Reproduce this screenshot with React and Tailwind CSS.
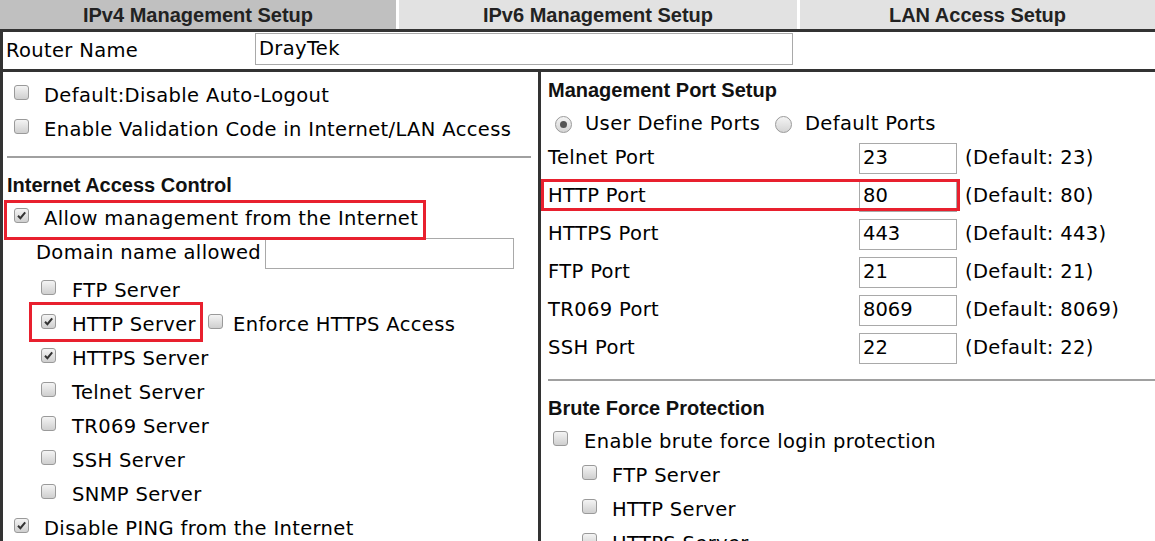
import React from "react";

function Check({ on }) {
    return (
        <span className="inline-flex w-[15px] h-[15px] shrink-0 items-center justify-center rounded-[3px] border border-[#9a9a9a] bg-linear-to-b from-[#f4f4f4] to-[#cfcfcf] mb-[7px]">
            {on && (
                <svg width="11" height="11" viewBox="0 0 11 11">
                    <path d="M2 5.8 L4.4 8.2 L9.2 2.4" fill="none" stroke="#333" strokeWidth="2" />
                </svg>
            )}
        </span>
    );
}

function Radio({ on }) {
    return (
        <span className="inline-flex w-[17px] h-[17px] shrink-0 items-center justify-center rounded-full border border-[#9a9a9a] bg-linear-to-b from-[#f4f4f4] to-[#d4d4d4]">
            {on && <span className="w-[7px] h-[7px] rounded-full bg-[#555]" />}
        </span>
    );
}

function Heading({ children, className = "" }) {
    return (
        <div className={"flex items-center pl-[4px] font-['Liberation_Sans',Arial,sans-serif] font-bold text-[20px] tracking-normal text-[#111] " + className}>
            {children}
        </div>
    );
}

const servers = [
    ["HTTPS Server", true],
    ["Telnet Server", false],
    ["TR069 Server", false],
    ["SSH Server", false],
    ["SNMP Server", false],
];

const ports = [
    ["Telnet Port", "23"],
    ["HTTP Port", "80", true],
    ["HTTPS Port", "443"],
    ["FTP Port", "21"],
    ["TR069 Port", "8069"],
    ["SSH Port", "22"],
];

export default function App() {
    return (
        <div className="w-[1155px] h-[541px] overflow-hidden bg-white text-black font-['DejaVu_Sans',Verdana,sans-serif] text-[19.5px] tracking-[0.35px] leading-none">
            {/* tabs */}
            <div className="flex h-[29px] gap-[3px] font-['Liberation_Sans',Arial,sans-serif] font-bold text-[20px] tracking-normal text-[#222]">
                <div className="w-[396px] bg-[#c0c0c0] flex items-center justify-center">IPv4 Management Setup</div>
                <div className="w-[398px] bg-[#e2e2e2] flex items-center justify-center">IPv6 Management Setup</div>
                <div className="flex-1 bg-[#e2e2e2] flex items-center justify-center">LAN Access Setup</div>
            </div>

            <div className="h-[3px] bg-[#333]" />
            <div className="h-[37px] flex items-center border-l-[3px] border-[#333]">
                <span className="w-[252px] pl-[3px]">Router Name</span>
                <div className="w-[538px] h-[32px] -mt-[3px] border border-[#a9a9a9] flex items-center pl-[3px]">DrayTek</div>
            </div>
            <div className="h-[3px] bg-[#333]" />

            <div className="flex">
                {/* left column */}
                <div className="w-[541px] shrink-0 h-[480px] border-l-[3px] border-r-[3px] border-[#333] pt-[7px]">
                    <div className="h-[34px] flex items-center pl-[11px]">
                        <Check />
                        <span className="ml-[15px]">Default:Disable Auto-Logout</span>
                    </div>
                    <div className="h-[34px] flex items-center pl-[11px]">
                        <Check />
                        <span className="ml-[15px]">Enable Validation Code in Internet/LAN Access</span>
                    </div>
                    <div className="mt-[9px] ml-[4px] w-[524px] h-[2px] bg-[#a0a0a0]" />

                    <Heading className="mt-[10px] h-[34px]">Internet Access Control</Heading>
                    <div className="relative h-[34px] flex items-center pl-[11px]">
                        <Check on />
                        <span className="ml-[15px]">Allow management from the Internet</span>
                        <span className="absolute left-[1px] -top-[2px] w-[422px] h-[40px] border-[3px] border-[#e8202e]" />
                    </div>
                    <div className="h-[34px] flex items-center pl-[33px]">
                        <span className="w-[229px]">Domain name allowed</span>
                        <div className="w-[249px] h-[31px] border border-[#a9a9a9]" />
                    </div>

                    <div className="mt-[4px] h-[34px] flex items-center pl-[38px]">
                        <Check />
                        <span className="ml-[16px]">FTP Server</span>
                    </div>
                    <div className="relative h-[34px] flex items-center pl-[38px]">
                        <Check on />
                        <span className="ml-[16px] w-[136px]">HTTP Server</span>
                        <Check />
                        <span className="ml-[10px]">Enforce HTTPS Access</span>
                        <span className="absolute left-[26px] -top-[6px] w-[174px] h-[40px] border-[3px] border-[#e8202e]" />
                    </div>
                    {servers.map(([label, on]) => (
                        <div key={label} className="h-[34px] flex items-center pl-[38px]">
                            <Check on={on} />
                            <span className="ml-[16px]">{label}</span>
                        </div>
                    ))}
                    <div className="h-[34px] flex items-center pl-[11px]">
                        <Check on />
                        <span className="ml-[15px]">Disable PING from the Internet</span>
                    </div>
                </div>

                {/* right column */}
                <div className="flex-1">
                    <Heading className="h-[35px] pl-[7px]">Management Port Setup</Heading>
                    <div className="h-[32px] pt-[2px] flex items-center pl-[14px]">
                        <Radio on />
                        <span className="ml-[13px] w-[190px]">User Define Ports</span>
                        <Radio />
                        <span className="ml-[13px]">Default Ports</span>
                    </div>
                    {ports.map(([label, value, marked]) => (
                        <div key={label} className="relative h-[38px] flex items-center pl-[7px]">
                            <span className="w-[311px]">{label}</span>
                            <div className="w-[98px] h-[31px] border border-[#a9a9a9] flex items-center pl-[3px] tracking-normal">{value}</div>
                            <span className="ml-[8px]">(Default: {value})</span>
                            {marked && <span className="absolute left-0 top-[2px] w-[419px] h-[32px] border-[3px] border-[#e8202e]" />}
                        </div>
                    ))}
                    <div className="mt-[12px] ml-[7px] h-[2px] bg-[#a0a0a0]" />

                    <Heading className="mt-[10px] h-[34px] pl-[7px]">Brute Force Protection</Heading>
                    <div className="h-[34px] flex items-center pl-[12px]">
                        <Check />
                        <span className="ml-[16px]">Enable brute force login protection</span>
                    </div>
                    {["FTP Server", "HTTP Server", "HTTPS Server"].map((label) => (
                        <div key={label} className="h-[34px] flex items-center pl-[41px]">
                            <Check />
                            <span className="ml-[15px]">{label}</span>
                        </div>
                    ))}
                </div>
            </div>
        </div>
    );
}
